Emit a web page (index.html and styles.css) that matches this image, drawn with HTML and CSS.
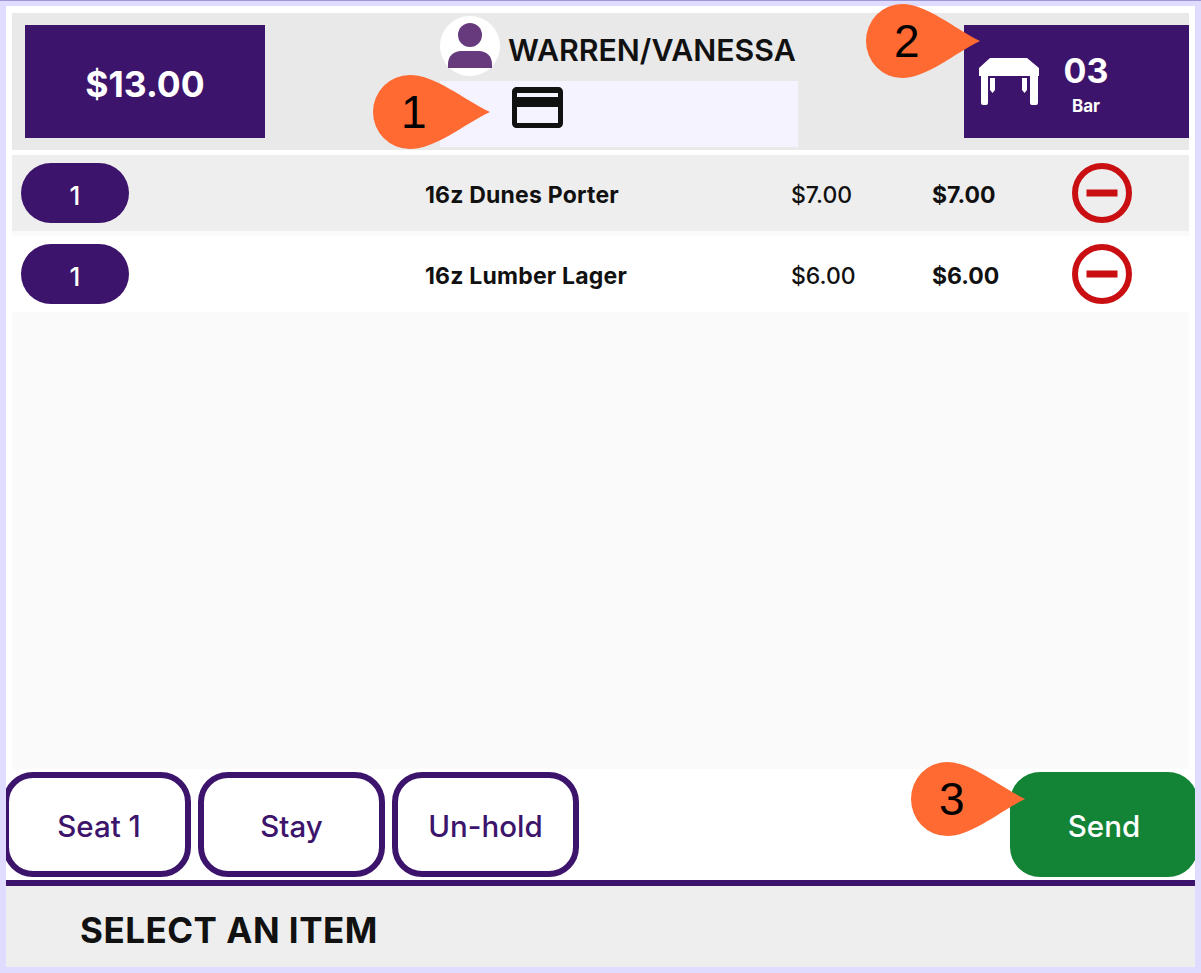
FILE: index.html
```html
<!DOCTYPE html>
<html lang="en">

<head>
    <meta charset="UTF-8">
    <meta name="viewport" content="width=device-width, initial-scale=1.0">
    <title>Order</title>
    <link rel="stylesheet" href="styles.css">
</head>

<body>
    <div class="screen">
        <header class="order-header">
            <div class="total-box">$13.00</div>

            <div class="client">
                <div class="client-name">
                    <span class="avatar">
                        <svg width="44" height="45" viewBox="0 0 44 45">
                            <ellipse cx="22" cy="12" rx="12" ry="12" fill="#673a7d" />
                            <path d="M0 45V41C0 33 6 28 13 28H31C38 28 44 33 44 41V45Z" fill="#673a7d" />
                        </svg>
                    </span>
                    <span class="client-label">WARREN/VANESSA</span>
                </div>
                <div class="client-card">
                    <svg width="51" height="41" viewBox="0 0 51 41">
                        <path fill="#111" fill-rule="evenodd"
                            d="M5 0H46C49 0 51 2 51 5V36C51 39 49 41 46 41H5C2 41 0 39 0 36V5C0 2 2 0 5 0ZM5 6V10H46V6ZM5 20V36H46V20Z" />
                    </svg>
                </div>
            </div>

            <div class="table-box">
                <svg width="60" height="47" viewBox="0 0 60 47">
                    <path fill="#fff"
                        d="M11 0H48L60 10V18H59V45Q59 47 57 47H53Q51 47 51 45V18H9V45Q9 47 7 47H4Q2 47 2 45V18H0V10ZM11 20H16V32L13.5 35L11 32ZM43 20H48V32L45.5 35L43 32Z" />
                </svg>
                <div class="table-info">
                    <span class="table-number">03</span>
                    <span class="table-area">Bar</span>
                </div>
            </div>
        </header>

        <div class="order-list">
            <div class="order-row shaded">
                <span class="qty">1</span>
                <span class="item-name">16z Dunes Porter</span>
                <span class="item-price">$7.00</span>
                <span class="item-total">$7.00</span>
                <svg class="remove" width="60" height="60" viewBox="0 0 60 60">
                    <circle cx="30" cy="30" r="27" fill="none" stroke="#c90f12" stroke-width="6" />
                    <rect x="14.5" y="26.5" width="31" height="7" fill="#c90f12" />
                </svg>
            </div>
            <div class="order-row">
                <span class="qty">1</span>
                <span class="item-name">16z Lumber Lager</span>
                <span class="item-price">$6.00</span>
                <span class="item-total">$6.00</span>
                <svg class="remove" width="60" height="60" viewBox="0 0 60 60">
                    <circle cx="30" cy="30" r="27" fill="none" stroke="#c90f12" stroke-width="6" />
                    <rect x="14.5" y="26.5" width="31" height="7" fill="#c90f12" />
                </svg>
            </div>
        </div>

        <div class="actions">
            <button class="btn-outline seat">Seat 1</button>
            <button class="btn-outline">Stay</button>
            <button class="btn-outline">Un-hold</button>
            <button class="btn-send">Send</button>
        </div>

        <footer class="order-footer">SELECT AN ITEM</footer>
    </div>

    <!-- numbered callouts on top of the screenshot -->
    <div class="callout callout-1">
        <svg width="117" height="74" viewBox="0 0 117 74">
            <path fill="#ff6a33" d="M37 0C62 0 90 24 117 37C90 50 62 74 37 74A37 37 0 0 1 37 0Z" />
        </svg>
        <span>1</span>
    </div>
    <div class="callout callout-2">
        <svg width="114" height="74" viewBox="0 0 117 74" preserveAspectRatio="none">
            <path fill="#ff6a33" d="M37 0C62 0 90 24 117 37C90 50 62 74 37 74A37 37 0 0 1 37 0Z" />
        </svg>
        <span>2</span>
    </div>
    <div class="callout callout-3">
        <svg width="114" height="74" viewBox="0 0 117 74" preserveAspectRatio="none">
            <path fill="#ff6a33" d="M37 0C62 0 90 24 117 37C90 50 62 74 37 74A37 37 0 0 1 37 0Z" />
        </svg>
        <span>3</span>
    </div>
</body>

</html>
```

FILE: styles.css
```css
* {
    box-sizing: border-box;
}

html,
body {
    height: 100%;
}

body {
    margin: 0;
    background-color: #e0dcff;
    border-top: 1px solid #9d97d8;
    font-family: Inter, "Liberation Sans", sans-serif;
    color: #111;
    overflow: hidden;
}

.screen {
    width: 1189px;
    height: 961px;
    margin: 5px 0 0 6px;
    background-color: #fff;
    display: flex;
    flex-direction: column;
}

.order-header {
    display: flex;
    align-items: flex-start;
    height: 137px;
    margin: 7px 6px 0;
    padding-left: 13px;
    background-color: #e9e9e9;
}

.total-box {
    width: 240px;
    height: 113px;
    margin-top: 12px;
    margin-right: 175px;
    padding-top: 5px;
    display: flex;
    align-items: center;
    justify-content: center;
    background-color: #3d146b;
    color: #fff;
    font-size: 35.5px;
    font-weight: 700;
}

.client {
    width: 358px;
    margin-top: 3px;
}

.client-name {
    display: flex;
    align-items: center;
    gap: 8px;
    font-size: 30.3px;
    font-weight: 600;
    white-space: nowrap;
}

.client-label {
    padding-top: 8px;
}

.avatar {
    flex: none;
    width: 60px;
    height: 60px;
    display: flex;
    justify-content: center;
    padding-top: 7px;
    border-radius: 50%;
    background-color: #fff;
}

.client-card {
    height: 66px;
    margin-top: 5px;
    padding: 6px 0 0 72px;
    background-color: #f5f3ff;
}

.table-box {
    width: 225px;
    height: 113px;
    margin-top: 12px;
    margin-left: auto;
    display: flex;
    align-items: center;
    padding-left: 15px;
    gap: 20px;
    background-color: #3d146b;
    color: #fff;
}

.table-info {
    display: flex;
    flex-direction: column;
    align-items: center;
    width: 54px;
    padding-top: 4px;
}

.table-number {
    font-size: 34px;
    font-weight: 700;
    line-height: 40px;
}

.table-area {
    margin-top: 4px;
    font-size: 17px;
    font-weight: 700;
    line-height: 22px;
}

.order-list {
    flex: 1;
    margin: 5px 6px 0;
    display: flex;
    flex-direction: column;
    gap: 5px;
    background-color: #fafafa;
}

.order-row {
    height: 76px;
    padding: 8px 0 0 9px;
    display: grid;
    grid-template-columns: 404px 366px 141px 140px 60px;
    align-items: start;
    background-color: #fff;
    font-size: 23px;
}

.order-row.shaded {
    background-color: #eee;
}

.qty {
    width: 108px;
    height: 60px;
    padding-top: 4px;
    display: flex;
    align-items: center;
    justify-content: center;
    border-radius: 30px;
    background-color: #3d146b;
    color: #fff;
    font-size: 26px;
    font-weight: 500;
}

.item-name,
.item-price,
.item-total {
    line-height: 64px;
}

.item-name {
    font-weight: 700;
    letter-spacing: 0.2px;
}

.item-total {
    font-weight: 700;
}

.item-price {
    font-weight: 500;
}

.actions {
    height: 111px;
    padding-top: 3px;
    display: flex;
    gap: 7px;
    background-color: #fff;
    overflow: hidden;
}

.btn-outline,
.btn-send {
    height: 105px;
    padding: 3px 0 0;
    border-radius: 30px;
    font-family: inherit;
    font-size: 29.5px;
    font-weight: 500;
}

.btn-outline {
    width: 187px;
    border: 6px solid #3d146b;
    background-color: #fff;
    color: #3d146b;
}

.btn-outline.seat {
    width: 188px;
    margin-left: -3px;
    padding-left: 4px;
}

.btn-send {
    width: 188px;
    margin-left: auto;
    margin-right: -3px;
    border: none;
    background-color: #138435;
    color: #fff;
}

.order-footer {
    height: 87px;
    padding: 6px 0 0 74px;
    display: flex;
    align-items: center;
    border-top: 6px solid #3d146b;
    background-color: #eee;
    font-size: 35px;
    font-weight: 700;
    letter-spacing: 0.5px;
}

.callout {
    position: absolute;
    display: grid;
    align-items: center;
    font-family: "Liberation Sans", Arial, sans-serif;
    font-size: 46px;
    color: #000;
}

.callout svg,
.callout span {
    grid-area: 1 / 1;
}

.callout span {
    padding-left: 28px;
    line-height: 74px;
}

.callout-1 {
    left: 373px;
    top: 75px;
}

.callout-2 {
    left: 866px;
    top: 4px;
}

.callout-3 {
    left: 911px;
    top: 762px;
}
```
